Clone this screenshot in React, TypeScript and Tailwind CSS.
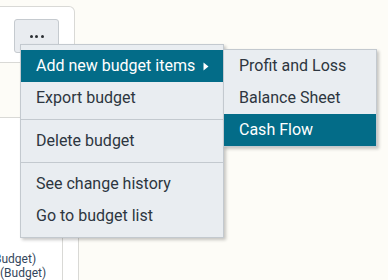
import React from "react";

const mainItems: (string | null)[] = [
  "Add new budget items",
  "Export budget",
  null,
  "Delete budget",
  null,
  "See change history",
  "Go to budget list",
];

const subItems = ["Profit and Loss", "Balance Sheet", "Cash Flow"];

export default function App() {
  return (
    <div className="relative w-[388px] h-[280px] overflow-hidden bg-[#fdfcf7] font-['Roboto',sans-serif] text-[#2d3640]">
      <div className="flex flex-col h-full">
        <div className="mt-[6px] w-[75px] h-[57px] bg-white border-y border-r border-[#d9d9d6] rounded-tr-[6px]">
          <button className="ml-[14px] mt-[12px] w-[45px] h-[34px] flex items-center justify-center gap-[2.5px] bg-[#e9ecf0] border border-[#c5cacf] rounded-[3px]">
            <span className="w-[3px] h-[3px] rounded-full bg-[#2b2f33]" />
            <span className="w-[3px] h-[3px] rounded-full bg-[#2b2f33]" />
            <span className="w-[3px] h-[3px] rounded-full bg-[#2b2f33]" />
          </button>
        </div>
        <div className="mt-[54px] flex-1 flex w-[79px] bg-white border-t border-r border-[#d9d9d6]">
          <div className="w-[63px] border-r border-[#d9d9d6] flex flex-col justify-end text-[12px] leading-[14px] text-[#33465c] overflow-hidden whitespace-nowrap">
            <div className="-ml-[6px]">Budget)</div>
            <div>(Budget)</div>
          </div>
          <div className="flex-1" />
        </div>
      </div>

      <div className="absolute left-[20px] top-[44px] w-[204px] py-[5px] bg-[#e9edf1] border border-[#c3c9cf] shadow-[2px_2px_3px_rgba(0,0,0,0.22)] text-[16px]">
        {mainItems.map((item, i) =>
          item === null ? (
            <div key={i} className="my-[5px] border-t border-[#c3c9cf]" />
          ) : (
            <div
              key={i}
              className={`h-8 flex items-center pl-[15px] ${i === 0 ? "bg-[#036c88] text-white" : ""}`}
            >
              <span>{item}</span>
              {i === 0 && (
                <svg className="ml-auto mr-[14px]" width="6" height="9" viewBox="0 0 6 9">
                  <path d="M0.5 0.5 L5.5 4.5 L0.5 8.5 Z" fill="white" />
                </svg>
              )}
            </div>
          )
        )}
      </div>

      <div className="absolute left-[223px] top-[49px] w-[154px] bg-[#e9edf1] border border-[#c3c9cf] shadow-[2px_2px_3px_rgba(0,0,0,0.22)] text-[16px]">
        {subItems.map((item, i) => (
          <div
            key={item}
            className={`h-8 flex items-center pl-[15px] ${i === 2 ? "bg-[#036c88] text-white" : ""}`}
          >
            {item}
          </div>
        ))}
      </div>
    </div>
  );
}
